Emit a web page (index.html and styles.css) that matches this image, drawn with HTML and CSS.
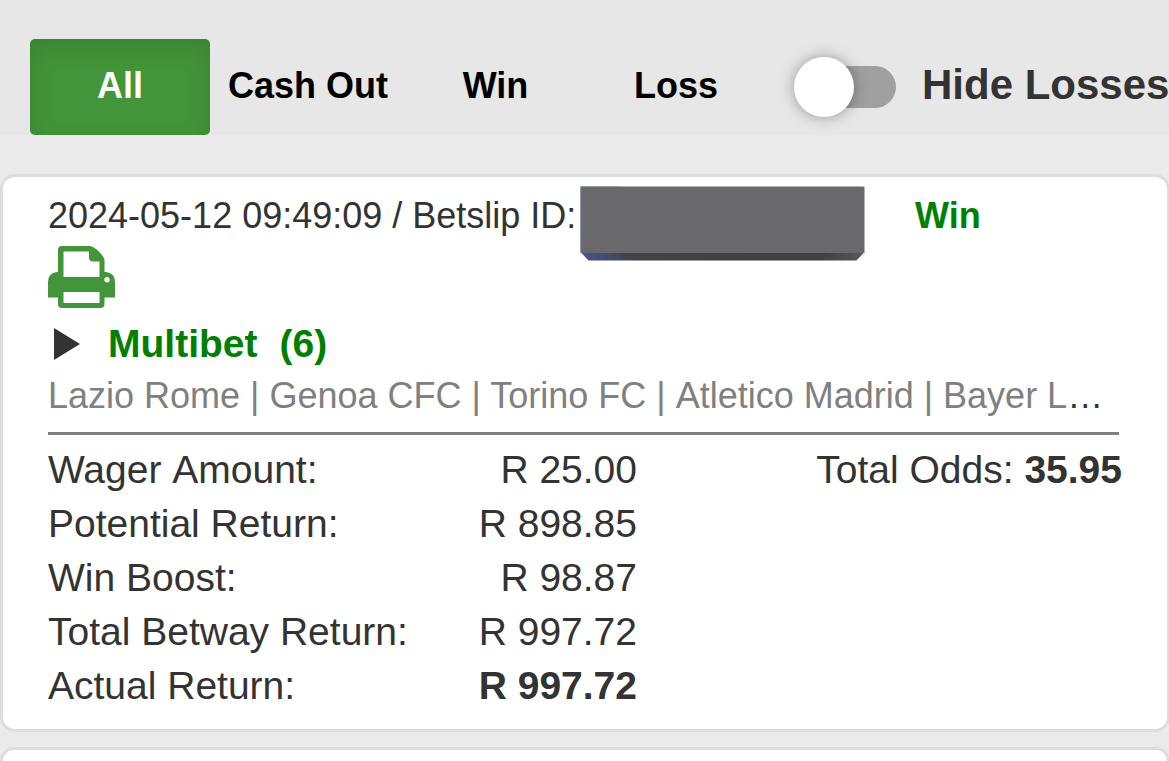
FILE: index.html
```
<!DOCTYPE html>
<html lang="en">
<head>
    <meta charset="UTF-8">
    <meta name="viewport" content="width=device-width, initial-scale=1.0">
    <title>My Bets</title>
    <link rel="stylesheet" href="styles.css">
</head>
<body>
    <!-- Filter tabs -->
    <div class="filters">
        <div class="tab active">All</div>
        <div class="tab cash-out">Cash Out</div>
        <div class="tab win">Win</div>
        <div class="tab loss">Loss</div>
        <div class="switch"><span class="knob"></span></div>
        <div class="switch-label">Hide Losses</div>
    </div>

    <!-- Betslip -->
    <div class="card">
        <div class="slip-header">
            <span class="slip-id">2024-05-12 09:49:09 / Betslip ID:</span>
            <svg class="redacted" width="285" height="75" viewBox="0 0 285 75">
                <defs>
                    <linearGradient id="edge">
                        <stop offset="0" stop-color="#45549a"/>
                        <stop offset="0.18" stop-color="#424248"/>
                        <stop offset="0.85" stop-color="#404042"/>
                        <stop offset="1" stop-color="#59595b"/>
                    </linearGradient>
                </defs>
                <path fill="url(#edge)" d="M.5 66h284l-8 8.500H8.500z"/>
                <path fill="#69696b" d="M1.500.5h282l1 1V67H.5V1.500z"/>
                <path fill="none" stroke="#6979aa" stroke-width="1" stroke-opacity=".6" d="M.8 67V.8H40"/>
            </svg>
            <span class="status">Win</span>
        </div>
        <svg class="print" width="67" height="62" viewBox="0 0 67 62">
            <path fill="#439539" fill-rule="evenodd" d="M14 0H42C46 0 56.500 10 56.500 14V26H58Q67 27 67 36V51.500H56.500V58Q56.500 62 52.500 62H14Q10 62 10 58V51.500H0V36Q0 27 9 26H10V4Q10 0 14 0ZM15.500 5.500V31H51.500V15.500H45Q41 15.500 41 11.500V5.500ZM15.500 46V57H51.500V46ZM59 31a2.700 2.700 0 1 0 0 5.400a2.700 2.700 0 0 0 0-5.400Z"/>
        </svg>
        <div class="bet-type">
            <span class="arrow"></span>
            <span>Multibet</span>
            <span class="count">(6)</span>
        </div>
        <div class="teams"><span>Lazio Rome | Genoa CFC | Torino FC |&nbsp;Atletico Madrid | Bayer L</span>…</div>
        <div class="details">
            <div class="amounts">
                <span>Wager&nbsp;Amount:</span><span class="value">R 25.00</span>
                <span>Potential Return:</span><span class="value">R 898.85</span>
                <span>Win Boost:</span><span class="value">R 98.87</span>
                <span>Total Betway Return:</span><span class="value">R 997.72</span>
                <span>Actual Return:</span><b class="value">R 997.72</b>
            </div>
            <div class="odds">Total Odds: <b>35.95</b></div>
        </div>
    </div>

    <!-- Next betslip -->
    <div class="card next"></div>
</body>
</html>
```
FILE: styles.css
```
body {
    font-family: "Liberation Sans", Arial, sans-serif;
    margin: 0;
    height: 761px;
    overflow: hidden;
    background-color: #ebebeb;
    color: #333;
}
.filters {
    display: flex;
    box-sizing: border-box;
    width: 1170px;
    height: 135px;
    padding: 39px 0 0 30px;
    margin-bottom: 39px;
    background-color: #e7e7e7;
    font-weight: bold;
    white-space: nowrap;
}
.tab {
    width: 180px;
    height: 96px;
    line-height: 94px;
    font-size: 36px;
    text-align: center;
    color: #000;
}
.tab.active {
    border-radius: 5px;
    background-color: #439539;
    box-shadow: inset 0 9px 24px rgba(0, 0, 0, 0.125);
    color: #fff;
}
.cash-out {
    width: 196px;
}
.win {
    width: 179px;
}
.loss {
    width: 182px;
}
.switch {
    position: relative;
    width: 96px;
    height: 42px;
    margin: 27px 26px 0 33px;
    border-radius: 21px;
    background-color: #a0a0a0;
}
.knob {
    position: absolute;
    left: -6px;
    top: -9px;
    width: 60px;
    height: 60px;
    border-radius: 50%;
    background-color: #fff;
    box-shadow: 0 0 15px rgba(0, 0, 0, 0.35);
}
.switch-label {
    font-size: 42px;
    line-height: 92px;
}
.card {
    box-sizing: border-box;
    width: 1170px;
    height: 558px;
    padding: 9px 45px 0;
    border: 3px solid #ddd;
    border-radius: 15px;
    background-color: #fff;
}
.card.next {
    height: 14px;
    margin-top: 15px;
    padding-top: 0;
    border-bottom: 0;
    border-radius: 15px 15px 0 0;
}
.slip-header {
    display: flex;
    height: 60px;
    font-size: 36px;
    line-height: 60px;
    white-space: nowrap;
}
.slip-id {
    width: 532px;
}
.redacted {
    flex: none;
    margin-right: 50px;
}
.status {
    font-weight: bold;
    color: green;
}
.print {
    display: block;
}
.bet-type {
    display: flex;
    align-items: center;
    height: 60px;
    margin-top: 6px;
    font-size: 39px;
    font-weight: bold;
    color: green;
}
.arrow {
    margin: 0 28px 0 6px;
    border-left: 26px solid #333;
    border-top: 16px solid transparent;
    border-bottom: 16px solid transparent;
}
.count {
    margin-left: 22px;
}
/* Selections, cut on one line */
.teams {
    width: 1071px;
    height: 58px;
    line-height: 43px;
    border-bottom: 3px solid #808080;
    font-size: 36px;
    white-space: nowrap;
}
.teams span {
    color: #808080;
}
.details {
    display: flex;
    justify-content: space-between;
    width: 1074px;
    padding-top: 8px;
    font-size: 39px;
    line-height: 54px;
}
.amounts {
    display: grid;
    grid-template-columns: 400px 189px;
}
.value {
    text-align: right;
}
```
